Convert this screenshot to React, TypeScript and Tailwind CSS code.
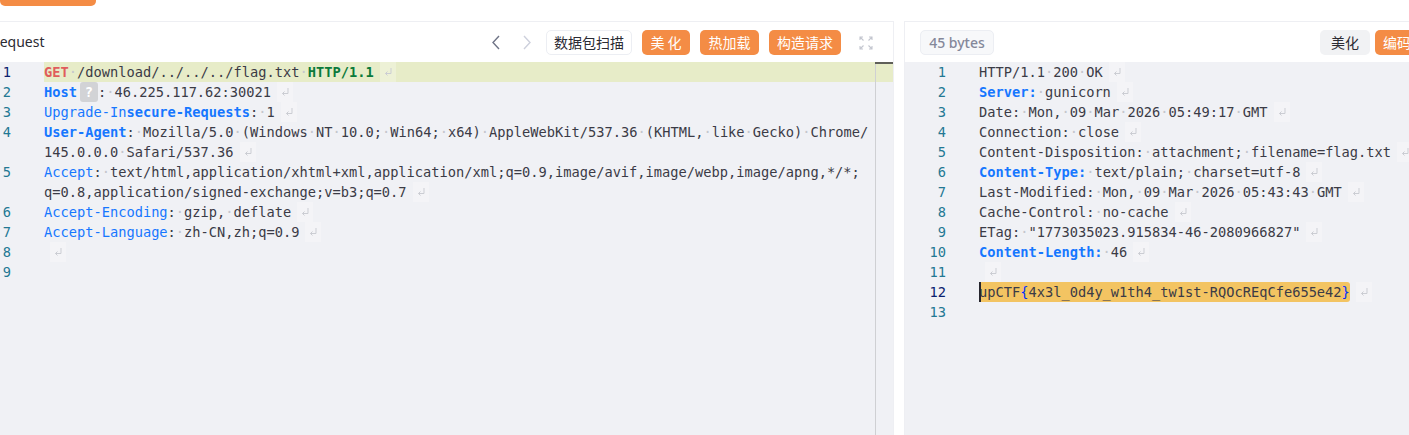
import React from 'react';

type Seg = [string, string?];

interface Row {
  n?: number;
  segs: Seg[];
  eol?: boolean;
  current?: boolean;
  active?: boolean;
}

const KEY = 'text-[#1677ff]';
const KEYB = 'text-[#1677ff] font-bold';

const requestRows: Row[] = [
  { n: 1, current: true, active: true, eol: true, segs: [['GET', 'text-[#e05c5c] font-bold'], [' /download/../../../flag.txt '], ['HTTP/1.1', 'text-[#0b7a3b] font-bold']] },
  { n: 2, eol: true, segs: [['Host', KEYB], ['?chip'], [': 46.225.117.62:30021']] },
  { n: 3, eol: true, segs: [['Upgrade-In', KEY], ['secure-Requests', KEYB], [': 1']] },
  { n: 4, segs: [['User-Agent', KEYB], [': Mozilla/5.0 (Windows NT 10.0; Win64; x64) AppleWebKit/537.36 (KHTML, like Gecko) Chrome/']] },
  { eol: true, segs: [['145.0.0.0 Safari/537.36']] },
  { n: 5, segs: [['Accept', KEY], [': text/html,application/xhtml+xml,application/xml;q=0.9,image/avif,image/webp,image/apng,*/*;']] },
  { eol: true, segs: [['q=0.8,application/signed-exchange;v=b3;q=0.7']] },
  { n: 6, eol: true, segs: [['Accept-Encoding', KEY], [': gzip, deflate']] },
  { n: 7, eol: true, segs: [['Accept-Language', KEY], [': zh-CN,zh;q=0.9']] },
  { n: 8, eol: true, segs: [] },
  { n: 9, segs: [] },
];

const responseRows: Row[] = [
  { n: 1, eol: true, segs: [['HTTP/1.1 200 OK']] },
  { n: 2, eol: true, segs: [['Server:', KEYB], [' gunicorn']] },
  { n: 3, eol: true, segs: [['Date: Mon, 09 Mar 2026 05:49:17 GMT']] },
  { n: 4, eol: true, segs: [['Connection: close']] },
  { n: 5, eol: true, segs: [['Content-Disposition: attachment; filename=flag.txt']] },
  { n: 6, eol: true, segs: [['Content-Type:', KEYB], [' text/plain; charset=utf-8']] },
  { n: 7, eol: true, segs: [['Last-Modified: Mon, 09 Mar 2026 05:43:43 GMT']] },
  { n: 8, eol: true, segs: [['Cache-Control: no-cache']] },
  { n: 9, eol: true, segs: [['ETag: "1773035023.915834-46-2080966827"']] },
  { n: 10, eol: true, segs: [['Content-Length:', KEYB], [' 46']] },
  { n: 11, eol: true, segs: [] },
  { n: 12, current: true, eol: true, segs: [['flag']] },
  { n: 13, segs: [] },
];

const Text = ({ text, cls }: { text: string; cls?: string }) => (
  <span className={cls}>
    {text.split(/( )/).map((part, i) =>
      part === ' ' ? (
        <span key={i} className="text-[#c4c6cc] font-normal">·</span>
      ) : (
        <span key={i}>{part}</span>
      )
    )}
  </span>
);

// end-of-line return marker
const Eol = () => (
  <span className="ml-[6px] inline-flex w-[16px] h-[20px] align-top items-center pl-[4px] bg-white/25">
    <svg width="8" height="10" viewBox="0 0 8 10" fill="none" stroke="#cbcdd3" strokeWidth="1">
      <path d="M7 1v5.5H1.5M3.5 4.5l-2 2 2 2" />
    </svg>
  </span>
);

const FlagText = () => (
  <span className="relative bg-[#f3c462] rounded-[3px] inline-block h-[20px]">
    <span className="absolute left-0 top-0 w-[2px] h-[20px] bg-[#26262e]" />
    upCTF<span className="text-[#0431fa]">{'{'}</span>4x3l_0d4y_w1th4_tw1st-RQOcREqCfe655e42<span className="text-[#0431fa]">{'}'}</span>
  </span>
);

const CodeRow = ({ row, gutter }: { row: Row; gutter: string }) => (
  <div className="flex h-[20px] leading-[20px]">
    <div className={`${gutter} shrink-0 text-right ${row.current ? 'text-[#0b216f]' : 'text-[#237893]'}`}>
      {row.n}
    </div>
    <div className={`ml-[33px] flex-1 whitespace-pre ${row.active ? 'bg-[#e7ecc8]' : ''}`}>
      {row.segs.map((s, i) =>
        s[0] === '?chip' ? (
          <span key={i} className="ml-[3px] inline-block w-[18px] h-[20px] align-top rounded-[3px] bg-[#d2d3d6] text-white font-bold text-center">?</span>
        ) : s[0] === 'flag' ? (
          <FlagText key={i} />
        ) : (
          <Text key={i} text={s[0]} cls={s[1]} />
        )
      )}
      {row.eol && <Eol />}
    </div>
  </div>
);

const Orange = ({ children, w }: { children: React.ReactNode; w: string }) => (
  <button className={`${w} h-[25px] rounded-[5px] bg-[#f48c45] text-white text-[14px] leading-[25px] text-center`}>{children}</button>
);

const Chevron = ({ d, color }: { d: string; color: string }) => (
  <svg width="8" height="15" viewBox="0 0 8 15" fill="none" stroke={color} strokeWidth="1.4">
    <path d={d} />
  </svg>
);

const Expand = () => (
  <svg width="14" height="14" viewBox="0 0 14 14" fill="none" stroke="#c3c6cf" strokeWidth="1.1">
    <path d="M1 4V1h3M1 1l3.5 3.5M13 4V1h-3M13 1L9.5 4.5M1 10v3h3M1 13l3.5-3.5M13 10v3h-3M13 13L9.5 9.5" />
  </svg>
);

const mono = 'font-["DejaVu_Sans_Mono",monospace] text-[13.7px] text-[#3b3b46]';
const cjk = 'font-["Noto_Sans_CJK_SC","Noto_Sans",sans-serif]';

export default function App() {
  return (
    <div className={`h-[435px] w-[1409px] overflow-hidden bg-white flex flex-col ${cjk}`}>
      <div className="h-[21px] shrink-0">
        <div className="h-[6px] w-[96px] bg-[#f48c45] rounded-b-[5px]" />
      </div>
      <div className="flex flex-1 min-h-0">
        <div className="relative ml-[-25px] w-[919px] shrink-0 flex flex-col border-t border-r border-[#eeeff3]">
          <div className="h-[40px] shrink-0 flex items-center pl-[16px]">
            <span className="text-[14px] text-[#2b2b33] mt-[-1px] font-['Noto_Sans',sans-serif]">Request</span>
            <div className="ml-auto mt-px flex items-center">
              <Chevron d="M7 1L1 7.5 7 14" color="#6f7486" />
              <div className="w-[23px]" />
              <Chevron d="M1 1l6 6.5L1 14" color="#cdd0dc" />
              <div className="w-[15px]" />
              <button className="w-[86px] h-[25px] rounded-[5px] border border-[#eceef3] bg-white text-[14px] text-[#2b2b33] leading-[23px] mr-[10px]">数据包扫描</button>
              <Orange w="w-[48px] mr-[10px]">美 化</Orange>
              <Orange w="w-[59px] mr-[10px]">热加载</Orange>
              <Orange w="w-[72px] mr-[18px]">构造请求</Orange>
              <Expand />
              <div className="w-[20px]" />
            </div>
          </div>
          <div className={`relative flex-1 bg-[#f0f1f5] ${mono}`}>
            {requestRows.map((r, i) => <CodeRow key={i} row={r} gutter="w-[36px]" />)}
            <div className="absolute top-0 bottom-0 left-[900px] w-px bg-[#cfd0d3]" />
            <div className="absolute top-0 left-[900px] right-0 h-[2px] bg-[#5f5f58]" />
          </div>
        </div>
        <div className="ml-[10px] flex-1 min-w-0 flex flex-col border-t border-l border-[#eeeff3]">
          <div className="h-[40px] shrink-0 flex items-center pl-[15px]">
            <span className="mt-px h-[25px] w-[74px] rounded-[5px] border border-[#eceef3] bg-[#f7f8fa] text-[14px] font-medium leading-[23px] text-center text-[#85889a] font-['Noto_Sans',sans-serif]">45 bytes</span>
            <div className="ml-auto mt-px flex items-center">
              <button className="w-[50px] h-[25px] rounded-[5px] bg-[#f1f2f4] text-[14px] text-[#2b2b33] leading-[25px] mr-[5px]">美化</button>
              <button className="w-[34px] h-[25px] rounded-l-[5px] bg-[#f48c45] text-white text-[14px] leading-[25px] overflow-hidden whitespace-nowrap text-left pl-[8px]">编码</button>
            </div>
          </div>
          <div className={`flex-1 bg-[#f0f1f5] ${mono}`}>
            {responseRows.map((r, i) => <CodeRow key={i} row={r} gutter="w-[41px]" />)}
          </div>
        </div>
      </div>
    </div>
  );
}
